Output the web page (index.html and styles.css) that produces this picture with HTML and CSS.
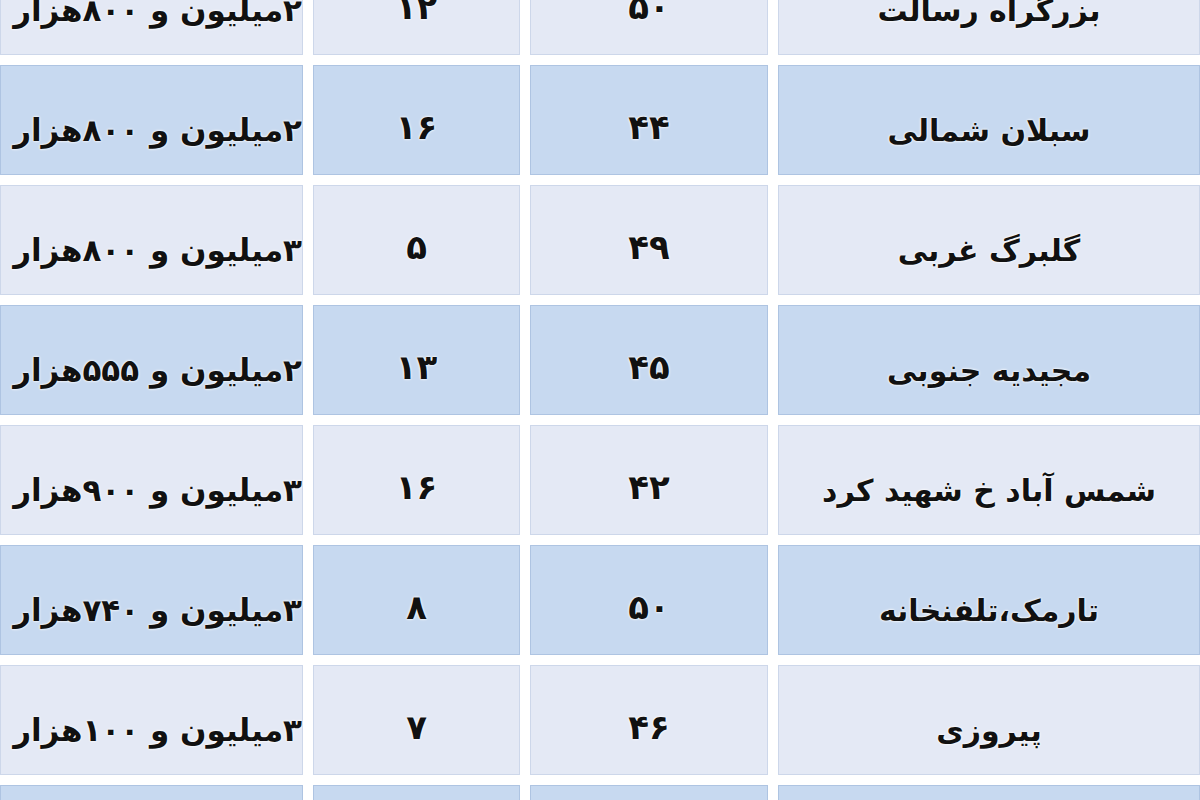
FILE: index.html
```html
<!DOCTYPE html>
<html lang="fa" dir="rtl">
<head>
<meta charset="utf-8">
<title>جدول قیمت</title>
<link rel="stylesheet" href="styles.css">
</head>
<body>
<div class="table">
  <div class="row light">
    <div class="cell name">بزرگراه رسالت</div>
    <div class="cell num">۵۰</div>
    <div class="cell num">۱۲</div>
    <div class="cell price">۲میلیون و ۸۰۰هزار</div>
  </div>
  <div class="row blue">
    <div class="cell name">سبلان شمالی</div>
    <div class="cell num">۴۴</div>
    <div class="cell num">۱۶</div>
    <div class="cell price">۲میلیون و ۸۰۰هزار</div>
  </div>
  <div class="row light">
    <div class="cell name">گلبرگ غربی</div>
    <div class="cell num">۴۹</div>
    <div class="cell num">۵</div>
    <div class="cell price">۳میلیون و ۸۰۰هزار</div>
  </div>
  <div class="row blue">
    <div class="cell name">مجیدیه جنوبی</div>
    <div class="cell num">۴۵</div>
    <div class="cell num">۱۳</div>
    <div class="cell price">۲میلیون و ۵۵۵هزار</div>
  </div>
  <div class="row light">
    <div class="cell name">شمس آباد خ شهید کرد</div>
    <div class="cell num">۴۲</div>
    <div class="cell num">۱۶</div>
    <div class="cell price">۳میلیون و ۹۰۰هزار</div>
  </div>
  <div class="row blue">
    <div class="cell name">تارمک،تلفنخانه</div>
    <div class="cell num">۵۰</div>
    <div class="cell num">۸</div>
    <div class="cell price">۳میلیون و ۷۴۰هزار</div>
  </div>
  <div class="row light">
    <div class="cell name">پیروزی</div>
    <div class="cell num">۴۶</div>
    <div class="cell num">۷</div>
    <div class="cell price">۳میلیون و ۱۰۰هزار</div>
  </div>
  <div class="row blue">
    <div class="cell name"></div>
    <div class="cell num"></div>
    <div class="cell num"></div>
    <div class="cell price"></div>
  </div>
</div>
</body>
</html>
```

FILE: styles.css
```css
html, body {
  margin: 0;
  padding: 0;
  background: #ffffff;
  overflow: hidden;
  width: 1200px;
  height: 800px;
}

.table {
  direction: rtl;
  display: flex;
  flex-direction: column;
  gap: 10px;
  margin-top: -55px;
  width: 1200px;
}

.row {
  display: grid;
  grid-template-columns: 422px 238px 207px 303px;
  column-gap: 10px;
  height: 110px;
}

.cell {
  display: flex;
  align-items: center;
  justify-content: center;
  padding-top: 20px;
  box-sizing: border-box;
  font-family: "DejaVu Sans", sans-serif;
  font-weight: bold;
  font-size: 30px;
  color: #111111;
  white-space: nowrap;
  text-shadow: 0 0 2px #ffffff, 0 0 3px #ffffff;
}

.num {
  font-size: 34px;
  padding-top: 14px;
}

.price {
  justify-content: flex-start;
  padding-right: 0;
  font-size: 31px;
  letter-spacing: 1px;
  overflow: visible;
}

.light .cell {
  background: #e4e9f5;
  border: 1px solid #cdd7ea;
}

.blue .cell {
  background: #c7d9f0;
  border: 1px solid #aec4e2;
}
```
